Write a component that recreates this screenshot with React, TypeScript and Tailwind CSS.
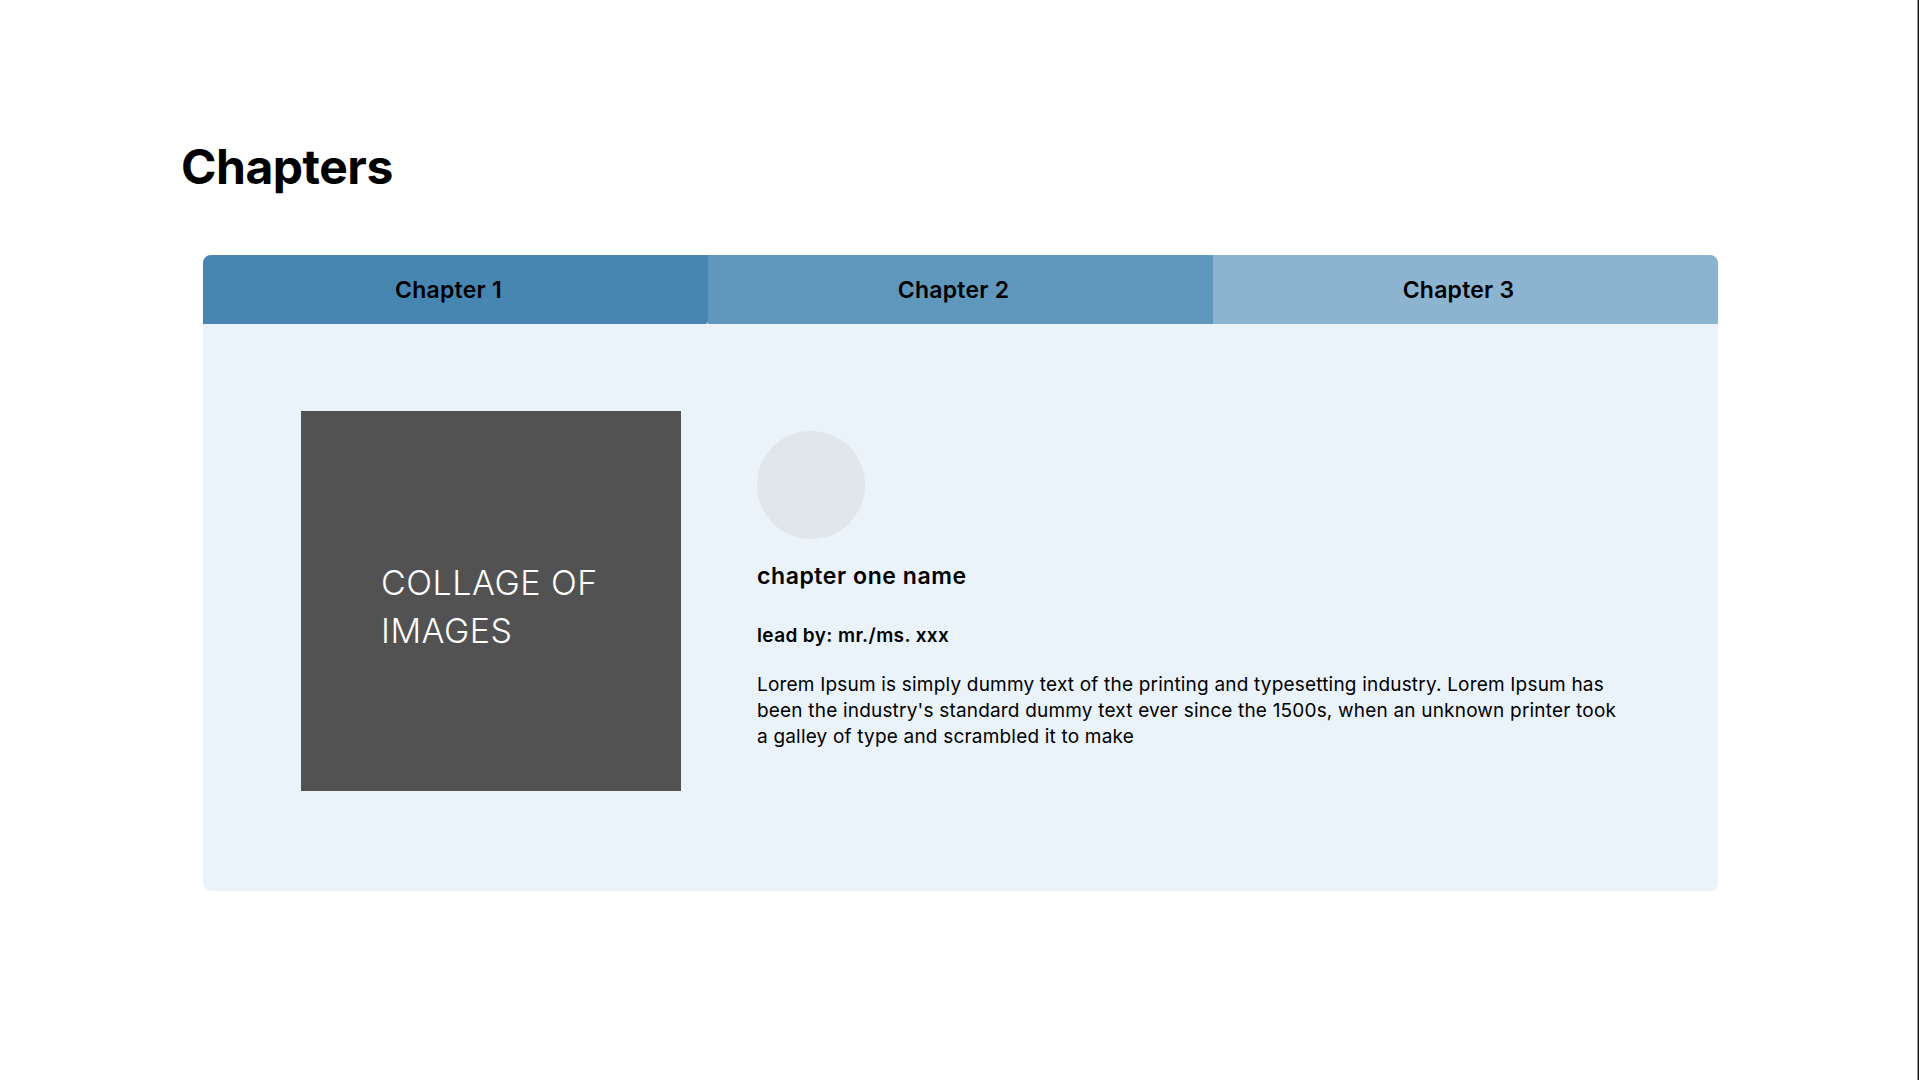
const chapters = [
  { title: 'Chapter 1', bg: 'bg-[#4886b2]' },
  { title: 'Chapter 2', bg: 'bg-[#6098bd]' },
  { title: 'Chapter 3', bg: 'bg-[#8cb3cf]' },
];

export default function App() {
  return (
    <div className="flex min-h-screen w-full bg-white font-['Inter',sans-serif] text-black">
      <main className="flex-1 pl-[181px] pt-[143px]">
        <h1 className="text-[48px] font-bold leading-none tracking-[-0.01em]">Chapters</h1>

        <section className="ml-[22px] mt-[64px] w-[1515px] overflow-hidden rounded-[8px] bg-[#eaf2fa]">
          {/* tabs */}
          <div className="grid h-[69px] grid-cols-3">
            {chapters.map((c, i) => (
              <button
                key={c.title}
                className={`flex items-center justify-center pr-[14px] pt-[2px] text-[23px] font-semibold leading-none tracking-[0.01em] ${c.bg} ${i === 0 ? 'rounded-br-[3px]' : ''}`}
              >
                {c.title}
              </button>
            ))}
          </div>

          {/* chapter body */}
          <div className="flex h-[567px] pl-[98px] pt-[87px]">
            <div className="h-[380px] w-[380px] shrink-0 bg-[#525252] pl-[80px] pt-[148px] text-[34px] font-light leading-[48px] tracking-[0.015em] text-white">
              COLLAGE OF
              <br />
              IMAGES
            </div>

            <div className="ml-[76px] flex flex-col pt-[20px]">
              <div className="h-[108px] w-[108px] rounded-full bg-[#e1e6ea]" />
              <h2 className="mt-[26px] text-[23px] font-semibold leading-none tracking-[0.025em]">chapter one name</h2>
              <p className="mt-[38px] text-[19px] font-semibold leading-none tracking-[0.02em]">lead by: mr./ms. xxx</p>
              <p className="mt-[27px] w-[900px] text-[19px] leading-[26px] tracking-[0.01em]">
                Lorem Ipsum is simply dummy text of the printing and typesetting industry. Lorem Ipsum has
                <br />
                been the industry's standard dummy text ever since the 1500s, when an unknown printer took
                <br />
                a galley of type and scrambled it to make
              </p>
            </div>
          </div>
        </section>
      </main>
      <div className="w-[1px] bg-[#9a9a9a]" />
      <div className="w-[1px] bg-[#111111]" />
      <div className="w-[1px] bg-white" />
    </div>
  );
}
